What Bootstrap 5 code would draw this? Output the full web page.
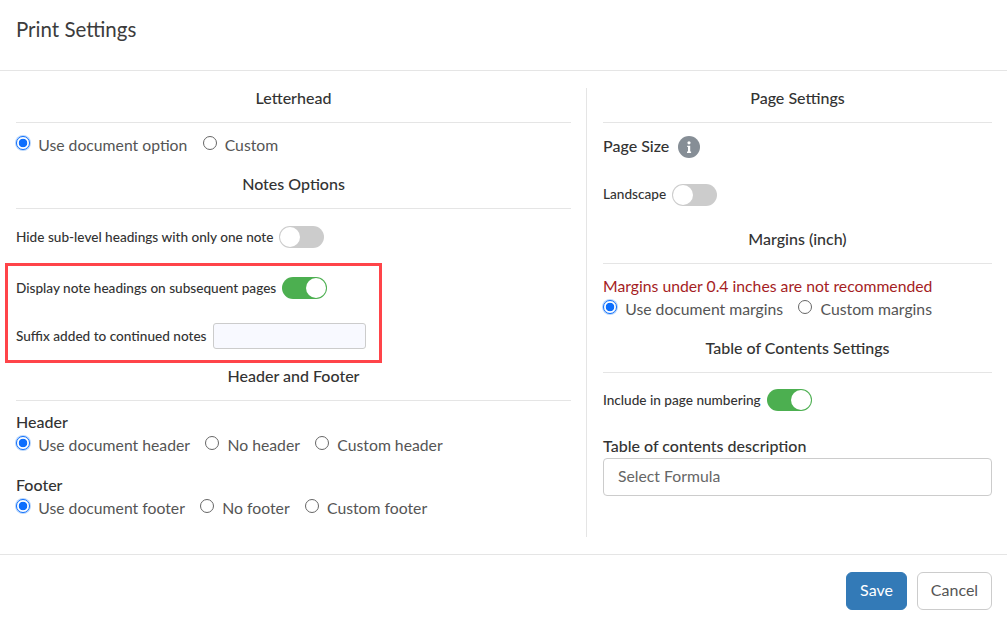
<!DOCTYPE html>
<html lang="en">
<head>
<meta charset="utf-8">
<title>Print Settings</title>
<link rel="stylesheet" href="https://cdn.jsdelivr.net/npm/bootstrap@5.3.0/dist/css/bootstrap.min.css">
<style>
html,body{height:100%;}
body{font-family:Lato,"Liberation Sans",sans-serif;font-size:15.75px;color:#444;background:#fff;overflow:hidden;}
.ps-head{height:71px;padding:17px 16px 0;border-bottom:1px solid #e5e5e5;}
.ps-title{font-size:20.5px;line-height:24px;font-weight:400;color:#3c3c3c;margin:0;}
.ps-body{padding:17px 15px 0 16px;height:483px;}
.ps-left{width:555px;flex:none;}
.ps-rule{width:1px;background:#e5e5e5;margin:0 16px 0 15px;height:449px;flex:none;}
.ps-right{flex:1 1 auto;}
.ps-sec{font-size:16px;font-weight:500;line-height:20px;text-align:center;color:#333;padding-bottom:14px;border-bottom:1px solid #e5e5e5;margin-bottom:0;}
.ps-radios{display:flex;align-items:center;height:24px;line-height:24px;color:#555;}
.ps-radios .form-check-input{width:14px;height:14px;margin:0 8.2px 0 0;flex:none;border-color:#666;position:relative;top:-2px;}
.ps-radios .form-check-input:checked{background-color:#fff;background-image:radial-gradient(circle,#0d6efd 0,#0d6efd 4px,#fff 4.6px);border-color:#0d6efd;box-shadow:0 0 0 1px #b9d6fb;}
.ps-radios label{margin-right:15.2px;}
.ps-sw-row{display:flex;align-items:center;height:22px;font-size:13.6px;font-weight:500;color:#333;}
.ps-sw{width:45px;height:22px;border-radius:11px;background:#ccc;position:relative;margin-left:6px;flex:none;}
.ps-sw::after{content:"";position:absolute;top:1px;left:1px;width:20px;height:20px;border-radius:50%;background:#fff;}
.ps-sw.ps-on{background:#4caf50;}
.ps-sw.ps-on::after{left:24px;}
.ps-box{border:3px solid #ff4449;width:377px;height:100px;margin:15px 0 3px -11px;padding:11px 0 0 8px;}
.ps-suffix{width:153px;height:26px;background:#f8f9ff;border:1px solid #ccc;border-radius:3px;margin-left:7px;flex:none;}
.ps-sub{font-size:16px;font-weight:500;line-height:20px;color:#333;margin-bottom:1px;}
.ps-up{margin-bottom:2px;}
.ps-info{width:22px;height:22px;border-radius:50%;background:#868e96;margin-left:9px;flex:none;}
.ps-warn{color:#a51d24;line-height:22px;}
.ps-select{height:38px;color:#666;border:1px solid #ccc;border-radius:4px;padding:0 14px 2px;display:flex;align-items:center;}
.ps-foot{height:84px;border-top:1px solid #e5e5e5;padding:17px 15px 0 0;gap:10px;}
.ps-save{background:#337ab7;border:1px solid #337ab7;color:#fff;width:61px;height:38px;padding:0 0 2px;font-size:16px;}
.ps-cancel{background:#fff;border:1px solid #ccc;color:#555;width:75px;height:38px;padding:0 0 2px;font-size:16px;}
.ps-g10{margin-top:10px}.ps-g11{margin-top:11px}.ps-g16{margin-top:16px}.ps-g17{margin-top:17px}.ps-g18{margin-top:18px}.ps-g13{margin-top:13px}.ps-g26{margin-top:26px}.ps-g23{margin-top:23px}.ps-g24{margin-top:24px}.ps-g25{margin-top:25px}.ps-g2{margin-top:2px}
.ps-tall{height:26px}
</style>
</head>
<body>
<div class="ps-head"><h1 class="ps-title">Print Settings</h1></div>
<div class="ps-body d-flex">
  <div class="ps-left">
    <div class="ps-sec">Letterhead</div>
    <div class="ps-radios ps-g10">
      <input class="form-check-input" type="radio" name="a" id="a1" checked><label for="a1">Use document option</label>
      <input class="form-check-input" type="radio" name="a" id="a2"><label for="a2">Custom</label>
    </div>
    <div class="ps-sec ps-g17">Notes Options</div>
    <div class="ps-sw-row ps-g17">Hide sub-level headings with only one note<span class="ps-sw"></span></div>
    <div class="ps-box">
      <div class="ps-sw-row">Display note headings on subsequent pages<span class="ps-sw ps-on"></span></div>
      <div class="ps-sw-row ps-tall ps-g24">Suffix added to continued notes<span class="ps-suffix"></span></div>
    </div>
    <div class="ps-sec">Header and Footer</div>
    <div class="ps-sub ps-g11">Header</div>
    <div class="ps-radios">
      <input class="form-check-input" type="radio" name="b" id="b1" checked><label for="b1">Use document header</label>
      <input class="form-check-input" type="radio" name="b" id="b2"><label for="b2">No header</label>
      <input class="form-check-input" type="radio" name="b" id="b3"><label for="b3">Custom header</label>
    </div>
    <div class="ps-sub ps-g18">Footer</div>
    <div class="ps-radios">
      <input class="form-check-input" type="radio" name="c" id="c1" checked><label for="c1">Use document footer</label>
      <input class="form-check-input" type="radio" name="c" id="c2"><label for="c2">No footer</label>
      <input class="form-check-input" type="radio" name="c" id="c3"><label for="c3">Custom footer</label>
    </div>
  </div>
  <div class="ps-rule"></div>
  <div class="ps-right">
    <div class="ps-sec">Page Settings</div>
    <div class="d-flex align-items-center ps-sub ps-g13"><span class="ps-up">Page Size</span>
      <span class="ps-info d-flex align-items-center justify-content-center">
        <svg width="22" height="22" viewBox="0 0 22 22" aria-hidden="true"><circle cx="11" cy="6.8" r="1.6" fill="#fff"/><path d="M9.2 9.8h3v5.8h.9v1.3H9v-1.3h1v-4.5h-.8z" fill="#fff"/></svg>
      </span>
    </div>
    <div class="ps-sw-row ps-g26"><span class="ps-up">Landscape</span><span class="ps-sw"></span></div>
    <div class="ps-sec ps-g23">Margins (inch)</div>
    <div class="ps-warn ps-g11">Margins under 0.4 inches are not recommended</div>
    <div class="ps-radios">
      <input class="form-check-input" type="radio" name="d" id="d1" checked><label for="d1">Use document margins</label>
      <input class="form-check-input" type="radio" name="d" id="d2"><label for="d2">Custom margins</label>
    </div>
    <div class="ps-sec ps-g17">Table of Contents Settings</div>
    <div class="ps-sw-row ps-g16">Include in page numbering<span class="ps-sw ps-on"></span></div>
    <div class="ps-sub ps-g25">Table of contents description</div>
    <div class="ps-select ps-g2">Select Formula</div>
  </div>
</div>
<div class="ps-foot d-flex justify-content-end align-items-start">
  <button type="button" class="btn ps-save">Save</button>
  <button type="button" class="btn ps-cancel">Cancel</button>
</div>
</body>
</html>
